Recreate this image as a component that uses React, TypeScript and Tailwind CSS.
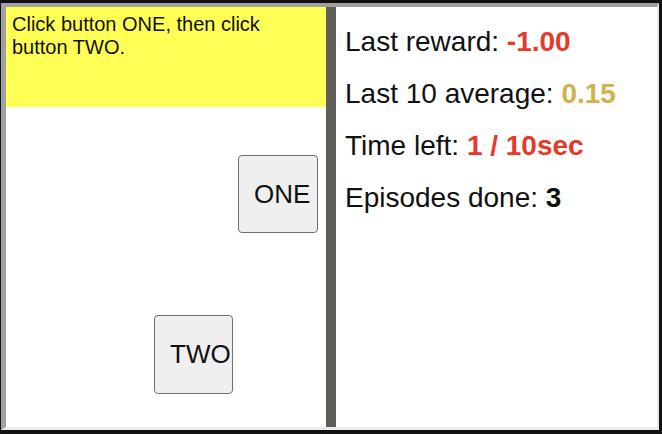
const stats = [
  { label: 'Last reward:', value: '-1.00', color: 'text-[#e5392a]' },
  { label: 'Last 10 average:', value: '0.15', color: 'text-[#d2b04c]' },
  { label: 'Time left:', value: '1 / 10sec', color: 'text-[#e5392a]' },
  { label: 'Episodes done:', value: '3', color: 'text-[#111111]' },
];

export default function App() {
  return (
    <div className="h-[434px] w-[662px] bg-[#111111] pt-[3px] pr-[3px] pb-[4px] pl-[1px] font-['Liberation_Sans',Arial,sans-serif] text-[#111111]">
      <div className="flex h-full border-t-[4px] border-r-[2px] border-b-[3px] border-l-[5px] border-t-[#a0a0a0] border-r-[#ebebeb] border-b-[#ebebeb] border-l-[#a0a0a0] bg-white">
        {/* task area */}
        <div className="flex w-[320px] flex-col">
          <div className="h-[100px] bg-[#ffff55] px-[6px] pt-[6px] text-[20px] leading-[23px]">
            Click button ONE, then click button TWO.
          </div>
          <div className="relative flex-1 bg-white">
            <button className="absolute top-[48px] left-[232px] flex h-[78px] w-[80px] items-center justify-start overflow-visible rounded-[4px] border border-[#6f6f6f] bg-[#efefef] px-[15px] text-[26px] whitespace-nowrap">
              ONE
            </button>
            <button className="absolute top-[208px] left-[148px] flex h-[79px] w-[79px] items-center justify-start overflow-visible rounded-[4px] border border-[#6f6f6f] bg-[#efefef] px-[15px] text-[26px] whitespace-nowrap">
              TWO
            </button>
          </div>
        </div>

        <div className="w-[10px] bg-[#5f5f5a]" />

        {/* stats */}
        <div className="flex flex-1 flex-col gap-[22px] pt-[20px] pl-[9px] text-[28px] leading-[30px]">
          {stats.map((s) => (
            <div key={s.label}>
              {s.label} <span className={`font-bold ${s.color}`}>{s.value}</span>
            </div>
          ))}
        </div>
      </div>
    </div>
  );
}
